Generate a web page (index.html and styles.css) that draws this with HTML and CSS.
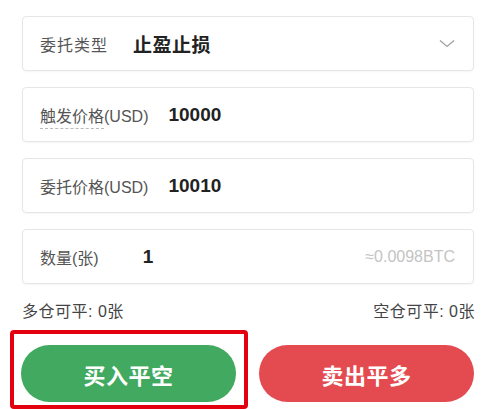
FILE: index.html
```html
<!DOCTYPE html>
<html lang="zh-CN">
<head>
<meta charset="utf-8">
<title>止盈止损</title>
<link rel="stylesheet" href="styles.css">
</head>
<body>
<div class="form">
  <div class="field field--select">
    <span class="label label--type">委托类型</span>
    <span class="value value--type">止盈止损</span>
    <svg class="chevron" width="16" height="9" viewBox="0 0 16 9"><polyline points="1,1.5 8,7.5 15,1.5" fill="none" stroke="#a0a0a0" stroke-width="1.3"/></svg>
  </div>
  <div class="field">
    <span class="label"><span class="dashed">触发价格</span>(USD)</span>
    <span class="value">10000</span>
  </div>
  <div class="field">
    <span class="label">委托价格(USD)</span>
    <span class="value">10010</span>
  </div>
  <div class="field">
    <span class="label label--qty">数量(张)</span>
    <span class="value">1</span>
    <span class="hint">≈0.0098BTC</span>
  </div>
</div>
<div class="info">
  <span>多仓可平: 0张</span>
  <span>空仓可平: 0张</span>
</div>
<div class="actions">
  <button class="btn btn--buy">买入平空</button>
  <button class="btn btn--sell">卖出平多</button>
  <span class="highlight"></span>
</div>
</body>
</html>
```
FILE: styles.css
```css
* { box-sizing: border-box; }
html, body { margin: 0; padding: 0; background: #fff; }
body {
  width: 500px;
  height: 409px;
  overflow: hidden;
  font-family: "Liberation Sans", "Noto Sans CJK SC", sans-serif;
  color: #333;
}
.form {
  padding: 16px 26px 0 22px;
  display: flex;
  flex-direction: column;
  gap: 16px;
}
.field {
  height: 55px;
  border: 1px solid #e6e6e6;
  border-radius: 4px;
  box-shadow: 0 1px 2px rgba(0,0,0,0.04);
  display: flex;
  align-items: center;
  padding: 0 18px 0 17px;
}
.label {
  font-size: 16px;
  color: #555;
  margin-right: 20px;
  white-space: nowrap;
}
.label--type { margin-right: 25px; letter-spacing: 1px; }
.label--qty { margin-right: 44px; }
.dashed {
  border-bottom: 1px dashed #b8b8b8;
  padding-bottom: 3px;
}
.value {
  font-size: 19px;
  font-weight: bold;
  color: #222;
}
.value--type { font-size: 19px; letter-spacing: 0.5px; }
.chevron { margin-left: auto; margin-right: 0; }
.hint {
  margin-left: auto;
  font-size: 16px;
  color: #c4c4c4;
}
.info {
  display: flex;
  justify-content: space-between;
  padding: 0 25px 0 22px;
  margin-top: 18px;
  line-height: 20px;
  font-size: 16px;
  letter-spacing: 0.5px;
  color: #444;
}
.actions {
  position: relative;
  display: flex;
  gap: 23px;
  padding: 23px 26px 0 21px;
}
.btn {
  flex: 1;
  height: 57px;
  border: none;
  border-radius: 29px;
  color: #fff;
  font-family: "Noto Sans CJK SC", sans-serif;
  font-size: 22px;
  font-weight: bold;
  letter-spacing: 0.5px;
  padding: 0;
}
.btn--buy { background: #42aa60; }
.btn--sell { background: #e44b50; }
.highlight {
  position: absolute;
  left: 10px;
  top: 8px;
  width: 238px;
  height: 79px;
  border: 4px solid #e3000f;
  border-radius: 4px;
  pointer-events: none;
}
```
